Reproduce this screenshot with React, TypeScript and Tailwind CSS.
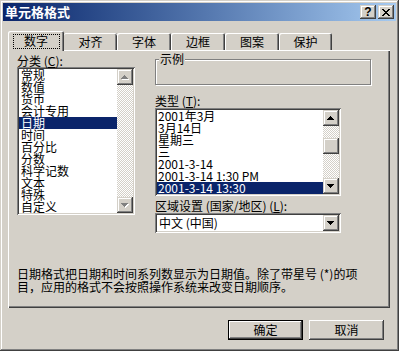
import React from 'react';

const categories = ['常规', '数值', '货币', '会计专用', '日期', '时间', '百分比', '分数', '科学记数', '文本', '特殊', '自定义'];
const types = ['2001年3月', '3月14日', '星期三', '三', '2001-3-14', '2001-3-14 1:30 PM', '2001-3-14 13:30'];

const otherTabs = [
  { label: '对齐', className: 'w-[53px] [box-shadow:inset_0_1px_#ffffff,inset_-1px_0_#404040,inset_-2px_0_#808080]' },
  { label: '字体', className: 'w-[54px] [box-shadow:inset_1px_1px_#ffffff,inset_-1px_0_#404040,inset_-2px_0_#808080]' },
  { label: '边框', className: 'w-[54px] [box-shadow:inset_1px_1px_#ffffff,inset_-1px_0_#404040,inset_-2px_0_#808080]' },
  { label: '图案', className: 'w-[54px] [box-shadow:inset_1px_1px_#ffffff,inset_-1px_0_#404040,inset_-2px_0_#808080]' },
  { label: '保护', className: 'w-[53px] [box-shadow:inset_1px_1px_#ffffff,inset_-1px_0_#404040,inset_-2px_0_#808080]' },
];

// classic 3D bevels
const raised = '[box-shadow:inset_-1px_-1px_#404040,inset_1px_1px_#ffffff,inset_-2px_-2px_#808080]';
const scrollRaised = '[box-shadow:inset_-1px_-1px_#404040,inset_1px_1px_#d4d0c8,inset_-2px_-2px_#808080,inset_2px_2px_#ffffff]';
const sunken = '[box-shadow:inset_1px_1px_#808080,inset_-1px_-1px_#ffffff,inset_2px_2px_#404040,inset_-2px_-2px_#d4d0c8]';
const checker = '[background-image:repeating-conic-gradient(#d4d0c8_0_25%,#ffffff_0_50%)] [background-size:2px_2px]';

const Arrow = ({ down, disabled }: { down?: boolean; disabled?: boolean }) => {
  const rows = [0, 1, 2, 3].map((i) => ({ x: 3 - i, w: 2 * i + 1, y: down ? 3 - i : i }));
  return (
    <svg width="8" height="5" viewBox="0 0 8 5" shapeRendering="crispEdges">
      {disabled &&
        rows.map((r) => <rect key={'s' + r.y} x={r.x + 1} y={r.y + 1} width={r.w} height={1} fill="#ffffff" />)}
      {rows.map((r) => (
        <rect key={r.y} x={r.x} y={r.y} width={r.w} height={1} fill={disabled ? '#808080' : '#000000'} />
      ))}
    </svg>
  );
};

const ScrollBtn = ({ down, disabled }: { down?: boolean; disabled?: boolean }) => (
  <div className={`w-[16px] h-[16px] shrink-0 bg-[#d4d0c8] flex items-center justify-center ${scrollRaised}`}>
    <Arrow down={down} disabled={disabled} />
  </div>
);

const CloseGlyph = () => {
  const rects = [
    [0, 0, 2], [6, 0, 2], [1, 1, 2], [5, 1, 2], [2, 2, 4], [3, 3, 2], [2, 4, 4], [1, 5, 2], [5, 5, 2], [0, 6, 2], [6, 6, 2],
  ];
  return (
    <svg width="8" height="7" viewBox="0 0 8 7" shapeRendering="crispEdges">
      {rects.map(([x, y, w], i) => (
        <rect key={i} x={x} y={y} width={w} height={1} fill="#000000" />
      ))}
    </svg>
  );
};

export default function App() {
  return (
    <div className="w-[399px] h-[351px] overflow-hidden bg-[#d4d0c8] p-[3px] text-[12px] leading-[12px] text-black font-['Noto_Sans_CJK_SC',sans-serif] [box-shadow:inset_-1px_-1px_#404040,inset_1px_1px_#d4d0c8,inset_-2px_-2px_#808080,inset_2px_2px_#ffffff]">
      {/* Title bar */}
      <div className="h-[18px] flex items-center justify-between px-[2px] bg-linear-to-r from-[#0a246a] to-[#a6caf0]">
        <span className="text-white font-bold text-[13px] leading-[14px]">单元格格式</span>
        <div className="flex gap-[2px]">
          <div className={`w-[16px] h-[14px] bg-[#d4d0c8] flex items-center justify-center ${scrollRaised}`}>
            <span className="font-['Liberation_Sans',sans-serif] font-bold text-[12px] leading-none">?</span>
          </div>
          <div className={`w-[16px] h-[14px] bg-[#d4d0c8] flex items-center justify-center ${scrollRaised}`}>
            <CloseGlyph />
          </div>
        </div>
      </div>

      <div className="ml-[5px] mt-[10px] w-[382px]">
        {/* Tabs */}
        <div className="flex items-end h-[19px]">
          <div className="relative z-10 -mb-px w-[56px] h-[20px] bg-[#d4d0c8] rounded-t-[2px] flex items-center justify-center [box-shadow:inset_1px_1px_#ffffff,inset_-1px_0_#404040,inset_-2px_0_#808080]">
            <span className="w-[47px] h-[15px] border border-dotted border-black flex items-center justify-center">
              数字
            </span>
          </div>
          {otherTabs.map((t) => (
            <div
              key={t.label}
              className={`h-[17px] rounded-t-[2px] flex items-center justify-center ${t.className}`}
            >
              {t.label}
            </div>
          ))}
        </div>

        {/* Tab page */}
        <div className="h-[258px] pt-[4px] pl-[9px] [box-shadow:inset_1px_1px_#ffffff,inset_-1px_-1px_#404040,inset_-2px_-2px_#808080]">
          <div className="flex">
            {/* Category */}
            <div className="w-[118px]">
              <div className="h-[13px] leading-[13px]">
                分类 (<u>C</u>):
              </div>
              <div className={`h-[148px] bg-white flex p-[2px] ${sunken}`}>
                <div className="flex-1">
                  {categories.map((c) => (
                    <div
                      key={c}
                      className={
                        c === '日期'
                          ? 'h-[12px] leading-[12px] pl-[2px] bg-[#0a246a] text-white'
                          : 'h-[12px] leading-[12px] pl-[2px]'
                      }
                    >
                      {c}
                    </div>
                  ))}
                </div>
                <div className="w-[16px] flex flex-col">
                  <ScrollBtn disabled />
                  <div className={`flex-1 ${checker}`} />
                  <ScrollBtn down disabled />
                </div>
              </div>
            </div>

            {/* Right side */}
            <div className="ml-[20px] w-[216px]">
              <div className="relative mt-[5px] h-[26px] border border-[#808080] [box-shadow:inset_1px_1px_#ffffff,1px_1px_#ffffff]">
                <span className="absolute -top-[7px] left-[3px] px-[1px] bg-[#d4d0c8] leading-[12px]">示例</span>
              </div>

              <div className="mt-[9px] h-[14px] leading-[14px]">
                类型 (<u>T</u>):
              </div>
              <div className={`w-[186px] h-[88px] bg-white flex p-[2px] ${sunken}`}>
                <div className="flex-1">
                  {types.map((t, i) => (
                    <div
                      key={t}
                      className={
                        i === types.length - 1
                          ? 'h-[12px] leading-[12px] pl-[1px] bg-[#0a246a] text-white whitespace-nowrap'
                          : 'h-[12px] leading-[12px] pl-[1px] whitespace-nowrap'
                      }
                    >
                      {t}
                    </div>
                  ))}
                </div>
                <div className="w-[16px] flex flex-col">
                  <ScrollBtn />
                  <div className={`h-[12px] ${checker}`} />
                  <div className={`h-[16px] bg-[#d4d0c8] ${scrollRaised}`} />
                  <div className={`flex-1 ${checker}`} />
                  <ScrollBtn down />
                </div>
              </div>

              <div className="mt-[3px] h-[14px] leading-[14px] whitespace-nowrap">
                区域设置 (国家/地区) (<u>L</u>):
              </div>
              <div className={`w-[186px] h-[20px] bg-white flex items-center p-[2px] ${sunken}`}>
                <div className="flex-1 pl-[2px]">中文 (中国)</div>
                <ScrollBtn down />
              </div>
            </div>
          </div>

          <div className="mt-[34px] leading-[13px] whitespace-nowrap">
            <div>日期格式把日期和时间系列数显示为日期值。除了带星号 (*)的项</div>
            <div>目，应用的格式不会按照操作系统来改变日期顺序。</div>
          </div>
        </div>
      </div>

      {/* Buttons */}
      <div className="mt-[12px] flex justify-end gap-[6px] pr-[12px]">
        <div className="w-[75px] h-[20px] border border-black">
          <div className={`w-full h-full flex items-center justify-center ${raised}`}>确定</div>
        </div>
        <div className={`w-[75px] h-[20px] flex items-center justify-center ${raised}`}>取消</div>
      </div>
    </div>
  );
}
